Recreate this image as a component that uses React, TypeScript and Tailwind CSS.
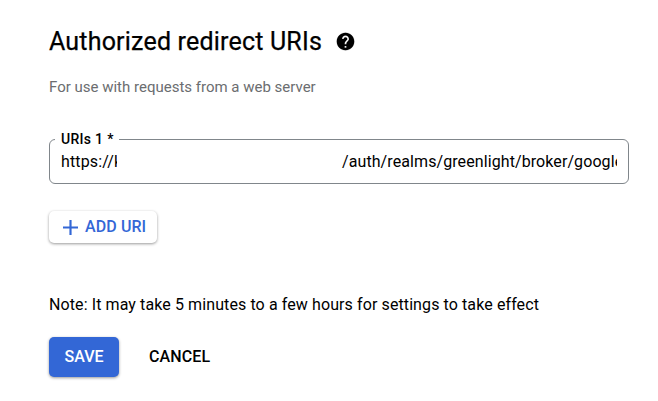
export default function App() {
  return (
    <main className="flex h-[401px] w-[658px] flex-col items-start overflow-hidden bg-white pl-[49px] pt-[26px] font-['Roboto',sans-serif] text-black">
      <div className="flex h-8 items-center">
        <h2 className="w-[273px] whitespace-nowrap text-[25px] font-normal leading-8 tracking-[0.19px] [-webkit-text-stroke:0.25px_black]">Authorized redirect URIs</h2>
        <svg className="mb-[2px] ml-[13px] size-[21px]" viewBox="0 0 24 24" fill="currentColor">
          <path d="M12 2C6.48 2 2 6.48 2 12s4.48 10 10 10 10-4.48 10-10S17.52 2 12 2zm1 17h-2v-2h2v2zm2.07-7.75-.9.92C13.45 12.9 13 13.5 13 15h-2v-.5c0-1.1.45-2.1 1.17-2.83l1.24-1.26c.37-.36.59-.86.59-1.41 0-1.1-.9-2-2-2s-2 .9-2 2H8c0-2.21 1.79-4 4-4s4 1.79 4 4c0 .88-.36 1.68-.93 2.25z" stroke="currentColor" strokeWidth="0.15" />
        </svg>
      </div>
      <p className="mt-[19px] text-[15px] leading-5 text-[#6b6d70]">For use with requests from a web server</p>
      <div className="relative mt-[42px] flex h-[45px] w-[580px] items-center rounded-[6px] border border-[#80868b] px-[11px]">
        <label className="absolute left-[5px] top-[-9px] w-[64px] whitespace-nowrap bg-white px-1.5 text-[14px] font-medium leading-4 tracking-[0.3px]">URIs 1 *</label>
        <div className="flex w-full overflow-hidden whitespace-nowrap text-[16px] leading-6 tracking-[0.14px]">
          <span className="w-[56px] shrink-0 overflow-hidden">https://k</span>
          <span className="ml-[225px] tracking-[0.09px]">/auth/realms/greenlight/broker/google/endpoint</span>
        </div>
      </div>
      <button className="mt-[27px] flex h-8 w-[108px] items-center rounded-[5px] pl-[14px] text-[16px] font-medium text-[#3367d6] shadow-[0_1px_3px_rgba(0,0,0,.4)]">
        <svg className="mr-[7px] size-[15px]" viewBox="0 0 16 16" fill="none" stroke="currentColor" strokeWidth="2.3"><path d="M8 0v16M0 8h16" /></svg>
        <span className="tracking-[0.1px]">ADD URI</span>
      </button>
      <p className="mt-[50px] text-[16px] leading-6 tracking-[0.1px]">Note: It may take 5 minutes to a few hours for settings to take effect</p>
      <div className="mt-5 flex items-center text-[16px] font-medium">
        <button className="h-10 w-[70px] rounded-[5px] bg-[#3367d6] text-white shadow-[0_1px_3px_rgba(0,0,0,.4)]">SAVE</button>
        <button className="ml-[30px] tracking-[0.1px]">CANCEL</button>
      </div>
    </main>
  );
}
